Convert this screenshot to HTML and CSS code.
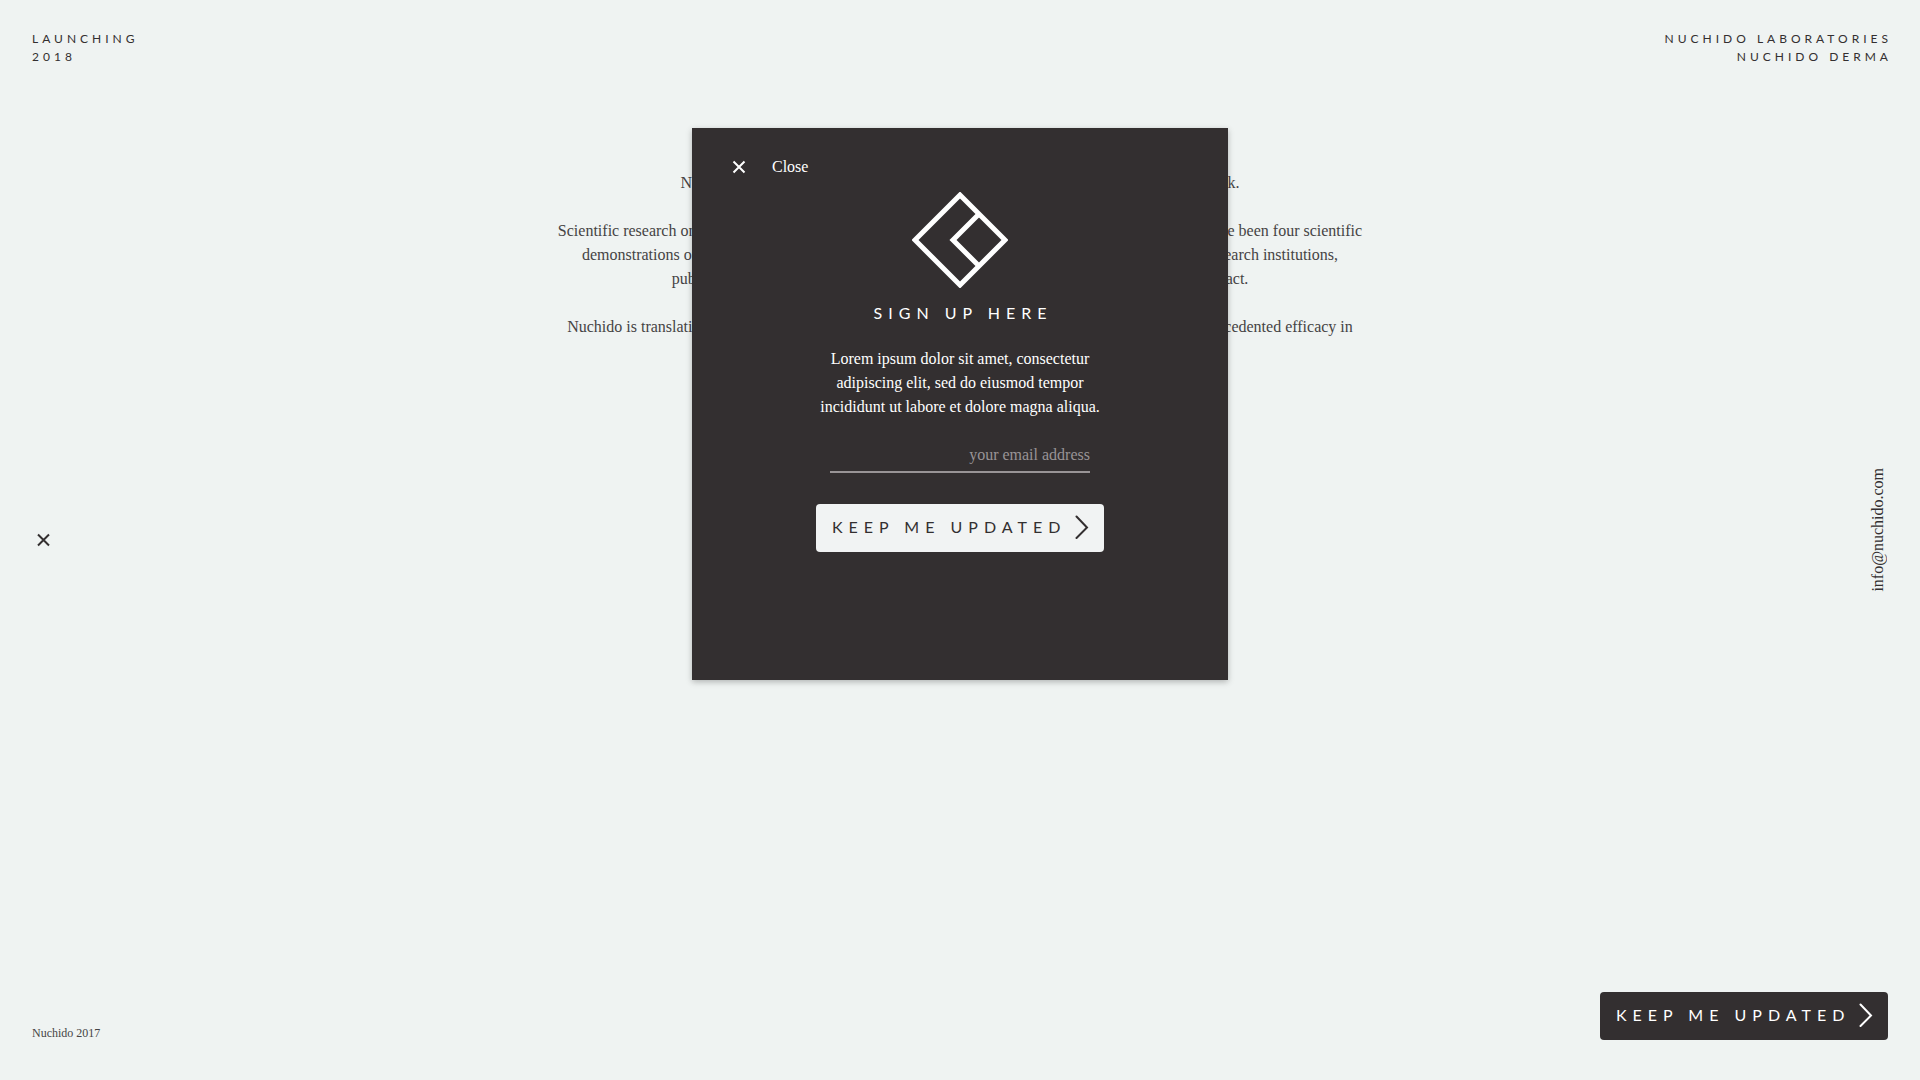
FILE: index.html
```html
<!DOCTYPE html>
<html lang="en">
<head>
<meta charset="utf-8">
<meta name="viewport" content="width=device-width, initial-scale=1">
<title>Nuchido</title>
<link rel="stylesheet" href="styles.css">
</head>
<body>
<div class="page">
  <header class="page-header">
    <p class="label">Launching<br>2018</p>
    <p class="label label-right">Nuchido Laboratories<br>Nuchido Derma</p>
  </header>

  <main class="main">
    <button class="icon-button" type="button" aria-label="Close page">
      <svg class="icon" viewBox="0 0 24 24" aria-hidden="true"><path d="M6 6.5l11 11M17 6.5l-11 11"/></svg>
    </button>
    <article class="article">
      <p>Nuchido is a British science company set up to make the science of ageing really work.</p>
      <p>Scientific research on the biology of human ageing has advanced dramatically in recent years. There have been four scientific<br>
      demonstrations of delayed ageing in the laboratory, each of them carried out by highly renowned research institutions,<br>
      published in respected scientific journals and all shown to have a lasting scientific impact.</p>
      <p>Nuchido is translating this research into everyday products that are designed to deliver results of unprecedented efficacy in</p>
    </article>
    <a class="email-link" href="mailto:info@nuchido.com">info@nuchido.com</a>
  </main>

  <footer class="page-footer">
    <small class="copyright">Nuchido 2017</small>
    <button class="button button-dark" type="button">
      Keep me updated
      <svg class="chevron" viewBox="0 0 14 24" aria-hidden="true"><path d="M1.5 1.5L12 12.5L1.5 23"/></svg>
    </button>
  </footer>
</div>

<div class="overlay">
  <section class="modal" role="dialog" aria-modal="true" aria-labelledby="signup-title">
    <button class="modal-close" type="button">
      <svg class="icon" viewBox="0 0 24 24" aria-hidden="true"><path d="M6.5 6.5l11 11M17.5 6.5l-11 11"/></svg>
      Close
    </button>
    <svg class="logo" viewBox="0 0 96 96" aria-hidden="true">
      <path d="M48 3L93 48L48 93L3 48ZM67 22L41 48L67 74"/>
    </svg>
    <h2 class="modal-title" id="signup-title">Sign up here</h2>
    <p class="modal-text">Lorem ipsum dolor sit amet, consectetur adipiscing elit, sed do eiusmod tempor incididunt ut labore et dolore magna aliqua.</p>
    <form class="signup">
      <input class="email-input" type="email" aria-label="Email address" placeholder="your email address">
      <button class="button button-light" type="submit">
        Keep me updated
        <svg class="chevron" viewBox="0 0 14 24" aria-hidden="true"><path d="M1.5 1.5L12 12.5L1.5 23"/></svg>
      </button>
    </form>
  </section>
</div>
</body>
</html>
```
FILE: styles.css
```css
:root {
  --dark: #332f30;
  --light: #eff3f2;
  --text: #454344;
  --serif: "Liberation Serif", "Times New Roman", serif;
  --sans: Lato, sans-serif;
}

* {
  box-sizing: border-box;
}

body {
  margin: 0;
  background: var(--light);
  color: var(--text);
  font: 16px/24px var(--serif);
}

button {
  border: 0;
  padding: 0;
  background: none;
  color: inherit;
  font: inherit;
  cursor: pointer;
}

.page {
  display: flex;
  flex-direction: column;
  min-height: 100vh;
  padding: 0 32px;
}

.page-header {
  display: flex;
  justify-content: space-between;
  padding: 30px 0 22px;
}

.label {
  margin: 0;
  color: var(--dark);
  font: 12px/18px var(--sans);
  letter-spacing: 4px;
  text-transform: uppercase;
}

/* Cancels the spacing that follows the last letter. */
.label-right {
  margin-right: -4px;
  text-align: right;
}

.main {
  flex: 1;
  display: grid;
  grid-template-columns: 1fr auto 1fr;
  align-items: center;
}

.icon {
  width: 24px;
  height: 24px;
  fill: none;
  stroke: currentColor;
  stroke-width: 2;
}

.icon-button {
  display: flex;
  justify-self: start;
  color: var(--dark);
}

.article {
  align-self: start;
  padding-top: 83px;
  text-align: center;
}

.article p {
  margin: 0 0 24px;
}

.email-link {
  justify-self: end;
  margin-bottom: 20px;
  color: var(--dark);
  line-height: 20px;
  text-decoration: none;
  writing-mode: vertical-rl;
  transform: rotate(180deg);
}

.page-footer {
  display: flex;
  align-items: flex-end;
  justify-content: space-between;
  padding-bottom: 40px;
}

.copyright {
  font-size: 12px;
  line-height: 14px;
}

.button {
  display: flex;
  align-items: center;
  justify-content: space-between;
  width: 288px;
  height: 48px;
  padding: 0 15px 2px 16px;
  border-radius: 4px;
  font: 16px/24px var(--sans);
  letter-spacing: 6px;
  text-transform: uppercase;
  white-space: nowrap;
}

.button-dark {
  background: var(--dark);
  color: #fff;
}

.button-light {
  background: #f1f3f3;
  color: var(--dark);
}

.chevron {
  flex: none;
  width: 14px;
  height: 24px;
  fill: none;
  stroke: currentColor;
  stroke-width: 2;
  stroke-linecap: round;
}

.overlay {
  position: absolute;
  inset: 0;
  display: flex;
  align-items: flex-start;
  justify-content: center;
  padding-top: 128px;
  pointer-events: none;
}

.modal {
  display: flex;
  flex-direction: column;
  align-items: center;
  width: min(536px, 100%);
  padding: 27px 35px 128px;
  background: var(--dark);
  box-shadow: 0 2px 6px rgba(0, 0, 0, 0.26);
  color: #fff;
  pointer-events: auto;
}

.modal-close {
  display: flex;
  align-items: center;
  align-self: flex-start;
  gap: 21px;
}

.logo {
  width: 96px;
  height: 96px;
  margin-top: 13px;
  fill: none;
  stroke: currentColor;
  stroke-width: 5;
}

/* The left padding balances the spacing that follows the last letter. */
.modal-title {
  margin: 13px 0 0;
  padding-left: 6px;
  font: 16px/24px var(--sans);
  letter-spacing: 6px;
  text-transform: uppercase;
}

.modal-text {
  max-width: 300px;
  margin: 22px 0 0;
  text-align: center;
}

.signup {
  display: flex;
  flex-direction: column;
  align-items: center;
  gap: 31px;
  margin-top: 22px;
}

.email-input {
  width: 260px;
  height: 32px;
  padding: 0 0 2px;
  border: 0;
  border-bottom: 2px solid #999496;
  border-radius: 0;
  outline: 0;
  background: none;
  color: #fff;
  font: inherit;
  text-align: right;
}

.email-input::placeholder {
  color: #999496;
  opacity: 1;
}
```
